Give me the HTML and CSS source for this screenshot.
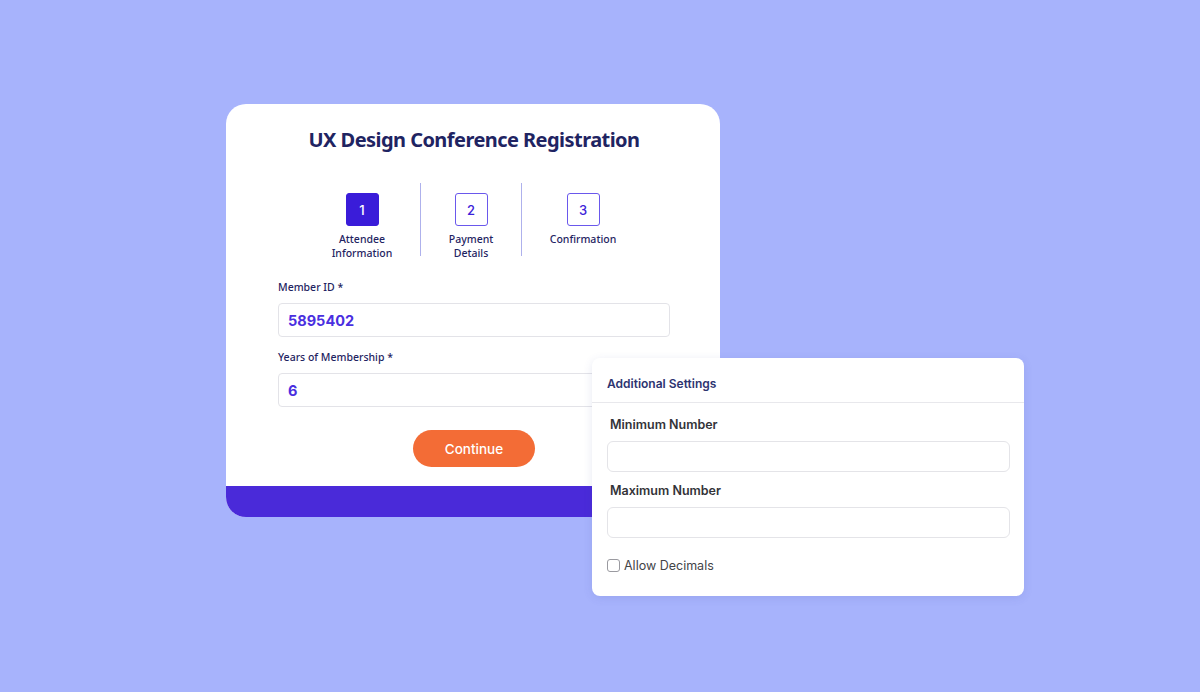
FILE: index.html
```html
<!DOCTYPE html>
<html>
<head>
<meta charset="utf-8">
<link rel="stylesheet" href="styles.css">
</head>
<body>
<div class="stage">
  <div class="card">
    <div class="card-body">
      <h1 class="title">UX Design Conference Registration</h1>
      <div class="steps">
        <div class="step step-1">
          <div class="step-box active">1</div>
          <div class="step-label">Attendee<br>Information</div>
        </div>
        <div class="step-divider"></div>
        <div class="step step-2">
          <div class="step-box">2</div>
          <div class="step-label">Payment<br>Details</div>
        </div>
        <div class="step-divider"></div>
        <div class="step step-3">
          <div class="step-box">3</div>
          <div class="step-label">Confirmation</div>
        </div>
      </div>
      <div class="field">
        <div class="field-label">Member ID *</div>
        <div class="field-input">5895402</div>
      </div>
      <div class="field">
        <div class="field-label">Years of Membership *</div>
        <div class="field-input">6</div>
      </div>
      <div class="actions">
        <button class="btn">Continue</button>
      </div>
    </div>
    <div class="card-foot"></div>
  </div>
  <div class="panel">
    <div class="panel-head">Additional Settings</div>
    <div class="panel-body">
      <div class="pfield">
        <div class="pfield-label">Minimum Number</div>
        <div class="pfield-input"></div>
      </div>
      <div class="pfield">
        <div class="pfield-label">Maximum Number</div>
        <div class="pfield-input"></div>
      </div>
      <label class="check"><span class="check-box"></span><span>Allow Decimals</span></label>
    </div>
  </div>
</div>
</body>
</html>
```
FILE: styles.css
```css
* { box-sizing: border-box; }
html, body { margin: 0; padding: 0; }
body {
  background: #a7b3fc;
  width: 1200px;
  height: 692px;
  overflow: hidden;
  font-family: "Noto Sans", sans-serif;
}
.stage {
  position: relative;
  width: 1200px;
  height: 692px;
  padding: 104px 0 0 226px;
}
.card {
  width: 494px;
  height: 413px;
  border-radius: 20px;
  overflow: hidden;
  background: #fff;
  display: flex;
  flex-direction: column;
}
.card-body {
  flex: 1;
  padding: 22px 50px 0 52px;
  display: flex;
  flex-direction: column;
}
.title {
  margin: 0;
  text-align: center;
  font-family: "Noto Sans", sans-serif;
  font-weight: 700;
  font-size: 20px;
  letter-spacing: -0.55px;
  line-height: 28px;
  color: #1f2462;
}
.steps {
  display: flex;
  justify-content: center;
  align-items: flex-start;
  margin-top: 29px;
  height: 73px;
}
.step {
  display: flex;
  flex-direction: column;
  align-items: center;
  padding-top: 10px;
  flex-shrink: 0;
}
.step-1 { width: 116px; }
.step-2 { width: 100px; }
.step-3 { width: 122px; }
.step-divider {
  width: 1px;
  height: 73px;
  flex-shrink: 0;
  background: #aeb1ec;
}
.step-box {
  width: 33px;
  height: 33px;
  flex-shrink: 0;
  border: 1.5px solid #6a58ec;
  border-radius: 3px;
  display: flex;
  align-items: center;
  justify-content: center;
  font-family: "Inter", sans-serif;
  font-weight: 500;
  font-size: 13px;
  color: #3b22d9;
}
.step-box.active {
  background: #3a1cd9;
  border-color: #3a1cd9;
  color: #fff;
}
.step-label {
  margin-top: 6px;
  text-align: center;
  font-family: "Noto Sans", sans-serif;
  font-weight: 500;
  font-size: 10.5px;
  line-height: 14px;
  color: #1f2462;
}
.field {
  margin-top: 24px;
}
.field + .field { margin-top: 13px; }
.field-label {
  font-family: "Noto Sans", sans-serif;
  font-weight: 500;
  font-size: 10.5px;
  line-height: 14px;
  color: #1f2462;
}
.field-input {
  margin-top: 9px;
  height: 34px;
  border: 1px solid #e3e3e8;
  border-radius: 4px;
  padding: 0 9px;
  display: flex;
  align-items: center;
  font-family: "Inter", sans-serif;
  font-weight: 700;
  font-size: 14.5px;
  color: #4a2fe0;
}
.actions {
  display: flex;
  justify-content: center;
  margin-top: 23px;
}
.btn {
  width: 122px;
  height: 37px;
  border: none;
  border-radius: 19px;
  background: #f36c36;
  color: #fff;
  font-family: "Inter", sans-serif;
  font-weight: 500;
  font-size: 13.5px;
  cursor: pointer;
}
.card-foot {
  height: 31px;
  background: #4a2ad9;
}
.panel {
  position: absolute;
  left: 592px;
  top: 358px;
  width: 432px;
  height: 238px;
  background: #fff;
  border-radius: 8px;
  box-shadow: 0 2px 10px rgba(60, 70, 160, 0.12);
  font-family: "Inter", sans-serif;
}
.panel-head {
  height: 45px;
  padding: 7px 15px 0;
  display: flex;
  align-items: center;
  border-bottom: 1px solid #e8e8ec;
  font-weight: 600;
  font-size: 12px;
  color: #2d3470;
}
.panel-body {
  padding: 14px 14px 0 15px;
}
.pfield-label {
  padding-left: 3px;
  font-weight: 600;
  font-size: 12.5px;
  line-height: 16px;
  color: #333338;
}
.pfield-input {
  margin-top: 8px;
  height: 31px;
  border: 1px solid #e4e4e8;
  border-radius: 6px;
}
.pfield + .pfield { margin-top: 11px; }
.check {
  display: flex;
  align-items: center;
  gap: 4px;
  margin-top: 20px;
  font-size: 12.5px;
  color: #444448;
}
.check-box {
  width: 13px;
  height: 13px;
  border: 1px solid #9a9aa0;
  border-radius: 3px;
  background: #fff;
}
```
